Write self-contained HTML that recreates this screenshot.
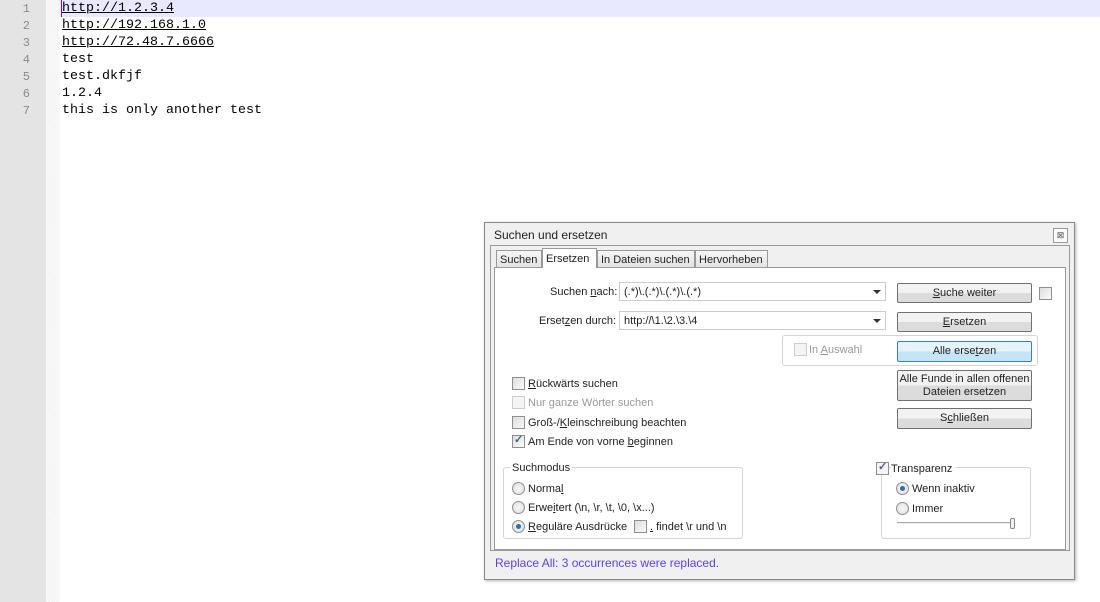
<!DOCTYPE html>
<html><head><meta charset="utf-8"><style>
body{margin:0;width:1100px;height:602px;position:relative;overflow:hidden;background:#fff;font-family:"Liberation Sans",sans-serif}
.gut{position:absolute;left:0;top:0;width:46px;height:602px;background:#e4e4e4}
.fold{position:absolute;left:46px;top:0;width:14px;height:602px;background:repeating-linear-gradient(45deg,#f2f2f2 0 1px,#fbfbfb 1px 2px)}
.hl{position:absolute;left:60px;top:0;width:1040px;height:17px;background:#e8e8ff}
.ln{position:absolute;left:0;width:30px;text-align:right;font:12px "Liberation Mono",monospace;color:#8a8a8a}
.tx{position:absolute;left:62px;font:13.33px "Liberation Mono",monospace;color:#000;white-space:pre}
.u{text-decoration:underline}
.a{position:absolute;font-size:11px;color:#222;white-space:nowrap;margin-top:1px}
.dlg{position:absolute;left:484px;top:222px;width:589px;height:356px;background:#f0f0f0;border:1px solid #888;box-shadow:1px 1px 3px rgba(0,0,0,.3)}
.box{position:absolute;border:1px solid #aaa}
.tab{position:absolute;top:250px;height:17px;border:1px solid #999;border-bottom:none;background:linear-gradient(#f6f6f6,#e3e3e3);font-size:11px;color:#222;line-height:19px;padding:0 3px;box-sizing:border-box;white-space:nowrap;overflow:hidden}
.cmb{position:absolute;left:619px;width:267px;height:19px;background:#fff;border:1px solid #ccc;box-sizing:border-box;font-size:11px;line-height:18px;padding-left:4px;color:#222}
.cmb:after{content:"";position:absolute;right:4px;top:7px;border:4px solid transparent;border-top:4px solid #333;border-bottom:none}
.btn{position:absolute;left:897px;width:135px;border:1px solid #707070;border-radius:2px;box-sizing:border-box;background:linear-gradient(#f2f2f2 50%,#dcdcdc 50%);font-size:11px;text-align:center;color:#222;line-height:19px}
.cb{position:absolute;width:11px;height:11px;border:1px solid #8f8f8f;background:linear-gradient(135deg,#ddd,#fafafa)}
.cb.d{border-color:#ccc;background:#f4f4f4}
.ck:after{content:"✓";position:absolute;left:1px;top:-3px;font-size:11px;color:#4a5f97;font-weight:bold}
.rd{position:absolute;width:11px;height:11px;border:1px solid #8f8f8f;border-radius:50%;background:radial-gradient(#f8f8f8,#ddd)}
.rd.on:after{content:"";position:absolute;left:3px;top:3px;width:5px;height:5px;border-radius:50%;background:#2a6fb0}
.grp{position:absolute;border:1px solid #d5d5d5;border-radius:3px}
</style></head><body>
<div class="gut"></div><div class="fold"></div><div class="hl"></div>
<div style="position:absolute;left:61px;top:0;width:1px;height:17px;background:#8000ff"></div>
<div class="ln" style="top:2px">1</div><div class="ln" style="top:19px">2</div><div class="ln" style="top:36px">3</div><div class="ln" style="top:53px">4</div><div class="ln" style="top:70px">5</div><div class="ln" style="top:87px">6</div><div class="ln" style="top:104px">7</div>
<div class="tx u" style="top:1px">http://1.2.3.4</div>
<div class="tx u" style="top:18px">http://192.168.1.0</div>
<div class="tx u" style="top:35px">http://72.48.7.6666</div>
<div class="tx" style="top:52px">test</div>
<div class="tx" style="top:69px">test.dkfjf</div>
<div class="tx" style="top:86px">1.2.4</div>
<div class="tx" style="top:103px">this is only another test</div>

<div class="dlg"></div>
<div class="a" style="left:494px;top:227px;font-size:12px">Suchen und ersetzen</div>
<div style="position:absolute;left:1053px;top:228px;width:13px;height:13px;border:1px solid #999;background:#fafafa;font-size:9px;text-align:center;line-height:13px;color:#555">⊠</div>
<div class="box" style="left:490px;top:245px;width:578px;height:304px;border-color:#999;background:#f0f0f0"></div>
<div class="box" style="left:494px;top:267px;width:570px;height:281px;border-color:#999;background:#fff"></div>
<div class="tab" style="left:496px;width:46px">Suchen</div>
<div class="tab" style="left:542px;top:248px;height:20px;width:55px;background:#fff;line-height:20px">Ersetzen</div>
<div class="tab" style="left:597px;width:98px">In Dateien suchen</div>
<div class="tab" style="left:695px;width:73px">Hervorheben</div>

<div class="a" style="left:550px;top:285px">Suchen <u>n</u>ach:</div>
<div class="cmb" style="top:282px">(.*)\.(.*)\.(.*)\.(.*)</div>
<div class="a" style="left:539px;top:314px">Erset<u>z</u>en durch:</div>
<div class="cmb" style="top:311px">http://\1.\2.\3.\4</div>

<div class="btn" style="top:283px;height:20px"><u>S</u>uche weiter</div>
<div class="cb" style="left:1039px;top:287px"></div>
<div class="btn" style="top:312px;height:20px"><u>E</u>rsetzen</div>
<div class="grp" style="left:782px;top:335px;width:254px;height:29px"></div>
<div class="cb d" style="left:794px;top:343px"></div>
<div class="a" style="left:809px;top:343px;color:#999">In <u>A</u>uswahl</div>
<div class="btn" style="top:341px;height:21px;border-color:#3c7fb1;background:linear-gradient(#e5f4fc 50%,#c4e5f6 50%)">Alle erse<u>t</u>zen</div>
<div class="btn" style="top:370px;height:31px;line-height:13px;padding-top:2px">Alle Funde in allen offenen<br>Dateien ersetzen</div>
<div class="btn" style="top:408px;height:21px">S<u>c</u>hließen</div>

<div class="cb" style="left:512px;top:377px"></div><div class="a" style="left:528px;top:377px"><u>R</u>ückwärts suchen</div>
<div class="cb d" style="left:512px;top:396px"></div><div class="a" style="left:528px;top:396px;color:#999">Nur <u>g</u>anze Wörter suchen</div>
<div class="cb" style="left:512px;top:416px"></div><div class="a" style="left:528px;top:416px">Groß-/<u>K</u>leinschreibung beachten</div>
<div class="cb ck" style="left:512px;top:435px"></div><div class="a" style="left:528px;top:435px">Am Ende von vorne <u>b</u>eginnen</div>

<div class="grp" style="left:503px;top:467px;width:238px;height:70px"></div>
<div class="a" style="left:510px;top:461px;background:#fff;padding:0 2px">Suchmodus</div>
<div class="rd" style="left:512px;top:482px"></div><div class="a" style="left:528px;top:482px">Norma<u>l</u></div>
<div class="rd" style="left:512px;top:501px"></div><div class="a" style="left:528px;top:501px">Erwe<u>i</u>tert (\n, \r, \t, \0, \x...)</div>
<div class="rd on" style="left:512px;top:520px"></div><div class="a" style="left:528px;top:520px"><u>R</u>eguläre Ausdrücke</div>
<div class="cb" style="left:634px;top:520px"></div><div class="a" style="left:650px;top:520px"><u>.</u> findet \r und \n</div>

<div class="grp" style="left:881px;top:467px;width:148px;height:70px"></div>
<div class="cb ck" style="left:876px;top:462px;background:#f4f4f4"></div><div class="a" style="left:891px;top:462px;background:#fff;padding-right:3px">Transparenz</div>
<div class="rd on" style="left:896px;top:482px"></div><div class="a" style="left:912px;top:482px">Wenn inaktiv</div>
<div class="rd" style="left:896px;top:502px"></div><div class="a" style="left:912px;top:502px">Immer</div>
<div style="position:absolute;left:897px;top:522px;width:114px;height:1px;background:#aaa;border-bottom:1px solid #eee"></div>
<div style="position:absolute;left:1010px;top:518px;width:3px;height:9px;border:1px solid #888;border-radius:2px;background:#f4f4f4"></div>

<div class="a" style="left:495px;top:555px;color:#5a40ff;font-size:12px">Replace All: 3 occurrences were replaced.</div>
</body></html>
